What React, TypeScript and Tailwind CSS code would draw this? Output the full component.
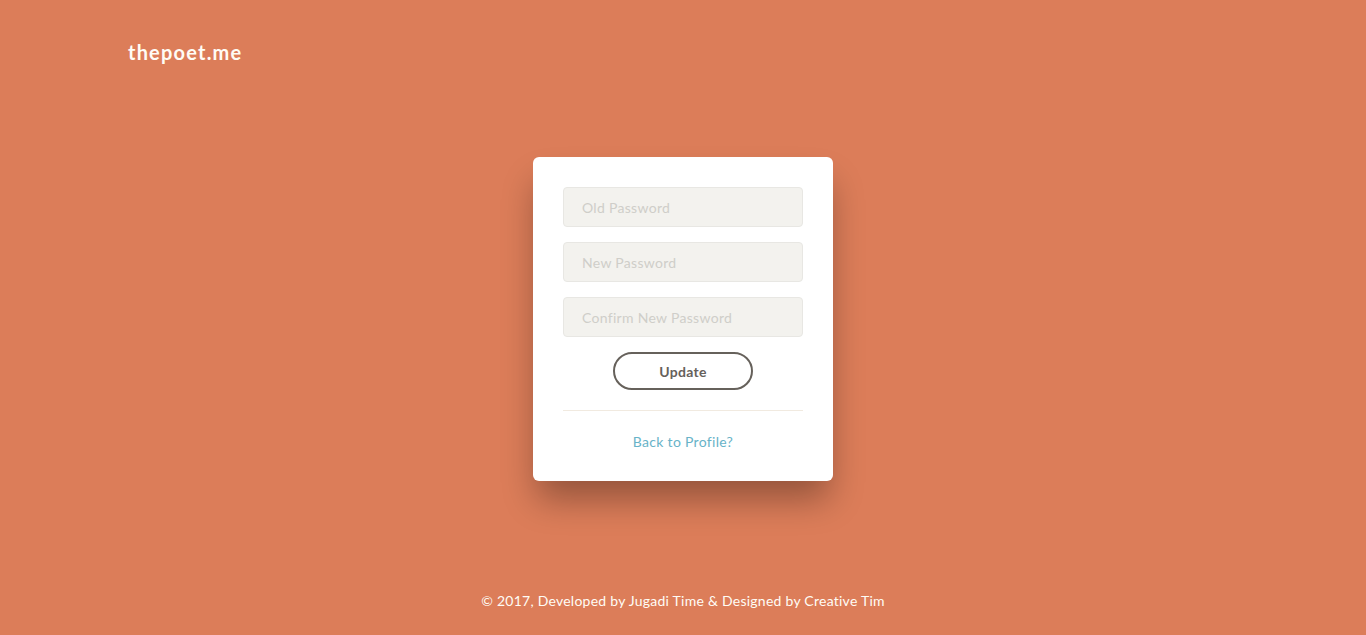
import React from "react";

export default function App() {
  const font = { fontFamily: '"Lato", "Noto Sans", sans-serif' };
  return (
    <div className="h-[635px] w-full bg-[#dc7d59] flex flex-col" style={font}>
      <div className="h-[106px] pl-[128px] pt-[37px]">
        <span className="text-[20px] font-bold text-[#fffcf5] tracking-[1.2px]">thepoet.me</span>
      </div>
      <div className="flex justify-center pt-[51px]">
        <div className="w-[300px] bg-white rounded-[6px] px-[30px] pt-[30px] pb-[29px] shadow-[0_22px_35px_-4px_rgba(0,0,0,0.33)]">
          <div className="flex flex-col gap-[15px]">
            {["Old Password", "New Password", "Confirm New Password"].map((p) => (
              <input
                key={p}
                placeholder={p}
                type="password"
                className="h-[40px] w-full rounded-[4px] border border-[#e8e7e3] bg-[#f3f2ee] px-[18px] text-[14px] tracking-[0.3px] text-[#66615b] placeholder:text-[#cfcec9] outline-none"
                style={font}
              />
            ))}
          </div>
          <div className="flex justify-center mt-[15px]">
            <button className="h-[38px] w-[140px] rounded-full border-2 border-[#66615b] text-[14px] tracking-[0.3px] font-bold text-[#66615b]" style={font}>
              Update
            </button>
          </div>
          <div className="mt-[20px] border-t border-[#f1eae0]" />
          <div className="mt-[21px] text-center text-[14px] tracking-[0.3px] text-[#68b3c8] leading-[20px]">Back to Profile?</div>
        </div>
      </div>
      <div className="mt-auto pb-[24px] text-center text-[14px] tracking-[0.25px] text-[#fffcf5] leading-[20px]">
        © 2017, Developed by Jugadi Time &amp; Designed by Creative Tim
      </div>
    </div>
  );
}
